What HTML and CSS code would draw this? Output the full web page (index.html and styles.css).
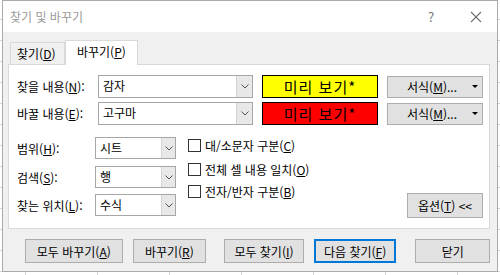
FILE: index.html
```html
<!DOCTYPE html>
<html lang="ko">
<head>
    <meta charset="UTF-8">
    <title>찾기 및 바꾸기</title>
    <link rel="stylesheet" href="styles.css">
</head>
<body>
    <div class="dialog">
        <div class="titlebar">
            <span class="title">찾기 및 바꾸기</span>
            <span class="help">?</span>
            <span class="close">
                <svg width="12" height="12" viewBox="0 0 12 12"><path d="M1 1 L11 11 M11 1 L1 11" stroke="#6e6e6e" stroke-width="1.1" fill="none"/></svg>
            </span>
        </div>

        <div class="main">
            <div class="tabs">
                <div class="tab">찾기(<u>D</u>)</div>
                <div class="tab active">바꾸기(<u>P</u>)</div>
            </div>

            <div class="panel">
                <div class="row">
                    <span class="label">찾을 내용(<u>N</u>):</span>
                    <div class="combo">
                        <span class="value">감자</span>
                        <span class="drop"><svg width="8" height="5" viewBox="0 0 8 5"><path d="M0.5 0.5 L4 4 L7.5 0.5" stroke="#555" fill="none"/></svg></span>
                    </div>
                    <div class="preview yellow">미리 보기*</div>
                    <button class="btn format">서식(<u>M</u>)...<span class="arrow"></span></button>
                </div>
                <div class="row">
                    <span class="label">바꿀 내용(<u>E</u>):</span>
                    <div class="combo">
                        <span class="value">고구마</span>
                        <span class="drop"><svg width="8" height="5" viewBox="0 0 8 5"><path d="M0.5 0.5 L4 4 L7.5 0.5" stroke="#555" fill="none"/></svg></span>
                    </div>
                    <div class="preview red">미리 보기*</div>
                    <button class="btn format">서식(<u>M</u>)...<span class="arrow"></span></button>
                </div>

                <div class="section">
                    <div class="selects">
                        <div class="srow">
                            <span class="slabel">범위(<u>H</u>):</span>
                            <div class="combo select">
                                <span class="value">시트</span>
                                <span class="drop"><svg width="8" height="5" viewBox="0 0 8 5"><path d="M0.5 0.5 L4 4 L7.5 0.5" stroke="#555" fill="none"/></svg></span>
                            </div>
                        </div>
                        <div class="srow">
                            <span class="slabel">검색(<u>S</u>):</span>
                            <div class="combo select">
                                <span class="value">행</span>
                                <span class="drop"><svg width="8" height="5" viewBox="0 0 8 5"><path d="M0.5 0.5 L4 4 L7.5 0.5" stroke="#555" fill="none"/></svg></span>
                            </div>
                        </div>
                        <div class="srow">
                            <span class="slabel">찾는 위치(<u>L</u>):</span>
                            <div class="combo select">
                                <span class="value">수식</span>
                                <span class="drop"><svg width="8" height="5" viewBox="0 0 8 5"><path d="M0.5 0.5 L4 4 L7.5 0.5" stroke="#555" fill="none"/></svg></span>
                            </div>
                        </div>
                    </div>

                    <div class="checks">
                        <label class="check"><span class="box"></span>대/소문자 구분(<u>C</u>)</label>
                        <label class="check"><span class="box"></span>전체 셀 내용 일치(<u>O</u>)</label>
                        <label class="check"><span class="box"></span>전자/반자 구분(<u>B</u>)</label>
                    </div>

                    <button class="btn options">옵션(<u>T</u>) &lt;&lt;</button>
                </div>
            </div>

            <div class="actions">
                <button class="btn replace-all">모두 바꾸기(<u>A</u>)</button>
                <button class="btn replace">바꾸기(<u>R</u>)</button>
                <button class="btn find-all">모두 찾기(<u>I</u>)</button>
                <button class="btn find-next">다음 찾기(<u>F</u>)</button>
                <button class="btn close-btn">닫기</button>
            </div>
        </div>
    </div>
</body>
</html>
```

FILE: styles.css
```css
* {
    box-sizing: border-box;
}
body {
    margin: 0;
    width: 500px;
    height: 275px;
    overflow: hidden;
    font-family: "Noto Sans CJK KR", "Noto Sans", sans-serif;
    font-size: 12px;
    color: #000;
    background-color: #fff;
    background-image:
        linear-gradient(to right, #d4d4d4 1px, transparent 1px),
        linear-gradient(to bottom, #d4d4d4 1px, transparent 1px);
    background-size: 72px 21px;
    background-position: 25px 19px;
}
u {
    text-decoration-thickness: 1px;
    text-underline-offset: 1px;
}
.dialog {
    margin-left: 2px;
    width: 496px;
    height: 272px;
    border: 1px solid #aaa;
    background: #f0f0f0;
}
.titlebar {
    height: 31px;
    background: #fff;
    display: flex;
    align-items: center;
    padding: 0 11px 0 7px;
}
.title {
    flex: 1;
    color: #999;
}
.help {
    width: 20px;
    text-align: center;
    color: #777;
    font-size: 13px;
}
.close {
    width: 20px;
    margin-left: 25px;
    display: flex;
    justify-content: center;
}
.main {
    padding: 8px 7px 0 5px;
}
.tabs {
    display: flex;
    align-items: flex-end;
    height: 24px;
    padding-left: 2px;
}
.tab {
    width: 55px;
    height: 22px;
    border: 1px solid #d9d9d9;
    border-bottom: none;
    padding-left: 6px;
    line-height: 21px;
}
.tab.active {
    position: relative;
    z-index: 1;
    width: 73px;
    height: 25px;
    margin-bottom: -1px;
    background: #fff;
    padding-left: 11px;
    line-height: 21px;
}
.panel {
    height: 165px;
    background: #fff;
    border: 1px solid #d9d9d9;
    padding: 10px 6px 0 8px;
}
.row {
    display: flex;
    align-items: center;
    height: 23px;
}
.row + .row {
    margin-top: 4px;
}
.label {
    width: 81px;
}
.combo {
    width: 155px;
    height: 23px;
    border: 1px solid #a6a6a6;
    display: flex;
    background: #fff;
}
.combo .value {
    flex: 1;
    padding-left: 4px;
    line-height: 20px;
}
.combo .drop {
    width: 16px;
    border-left: 1px solid #d4d4d4;
    background: #e8e8e8;
    display: flex;
    align-items: center;
    justify-content: center;
}
.preview {
    width: 116px;
    height: 23px;
    margin-left: 9px;
    border: 1px solid #000;
    text-align: center;
    font-size: 15px;
    letter-spacing: 1px;
    line-height: 21px;
}
.yellow {
    background: #ffff00;
}
.red {
    background: #ff0000;
}
.btn {
    font-family: inherit;
    font-size: 12px;
    color: #000;
    background: #e1e1e1;
    border: 1px solid #adadad;
    padding: 0;
    margin: 0;
}
.format {
    width: 96px;
    height: 22px;
    margin-left: 9px;
    display: flex;
    align-items: center;
    padding-left: 19px;
}
.arrow {
    margin-left: auto;
    margin-right: 4px;
    border-left: 3px solid transparent;
    border-right: 3px solid transparent;
    border-top: 3px solid #000;
}
.section {
    display: flex;
    margin-top: 12px;
}
.srow {
    display: flex;
    align-items: center;
    height: 22px;
}
.srow + .srow {
    margin-top: 7px;
}
.srow:last-child {
    margin-top: 6px;
}
.slabel {
    width: 78px;
}
.select {
    width: 81px;
    height: 22px;
}
.select .drop {
    width: 14px;
}
.checks {
    margin-left: 12px;
    padding-top: 2px;
    display: flex;
    flex-direction: column;
}
.check {
    display: flex;
    align-items: center;
    height: 13px;
}
.check + .check {
    margin-top: 11px;
}
.check:last-child {
    margin-top: 9px;
}
.box {
    width: 13px;
    height: 13px;
    border: 1px solid #333;
    background: #fff;
    margin-right: 4px;
}
.options {
    margin-left: auto;
    margin-top: 56px;
    align-self: flex-start;
    width: 76px;
    height: 25px;
}
.actions {
    display: flex;
    margin-top: 10px;
}
.actions .btn {
    height: 24px;
}
.replace-all {
    margin-left: 17px;
    width: 98px;
}
.replace {
    margin-left: 10px;
    width: 74px;
}
.find-all {
    margin-left: 18px;
    width: 80px;
}
.find-next {
    margin-left: 10px;
    width: 83px;
    border: 2px solid #0078d7;
}
.close-btn {
    margin-left: 19px;
    width: 75px;
}
```
